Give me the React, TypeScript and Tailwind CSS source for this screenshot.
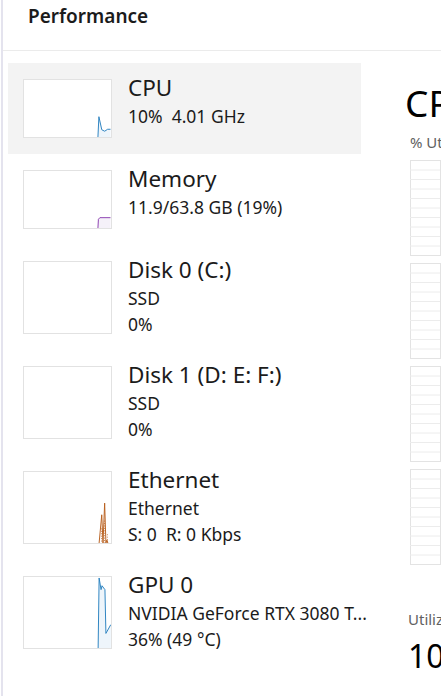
import React from "react";

type Row = {
  title: string;
  lines: string[];
  tall: boolean;
  selected?: boolean;
  graph: React.ReactNode;
};

const CpuGraph = () => (
  <svg viewBox="0 0 89 59" className="w-full h-full">
    <polygon points="76,59 77,38 80,51.5 83,53 86,51 89,51 89,59" fill="#eef5fb" />
    <polyline points="76,59 77,38 80,51.5 83,53 86,51 89,51" fill="none" stroke="#2a82c0" strokeWidth="1" />
  </svg>
);

const MemGraph = () => (
  <svg viewBox="0 0 89 59" className="w-full h-full">
    <polygon points="76,59 76.5,50 78,48.3 89,48.3 89,59" fill="#f5f1f9" />
    <polyline points="76,59 76.5,50 78,48.3 89,48.3" fill="none" stroke="#8b3fb0" strokeWidth="1" />
  </svg>
);

const EthGraph = () => (
  <svg viewBox="0 0 89 73" className="w-full h-full">
    <polyline points="77,73 79.7,44 81,73 82.7,32 84,73 85,70 86,73" fill="none" stroke="#b9601f" strokeWidth="1" />
    <line x1="79.5" y1="58" x2="79.5" y2="73" stroke="#b9601f" strokeWidth="0.8" strokeDasharray="1 1.5" />
    <line x1="82.5" y1="50" x2="82.5" y2="73" stroke="#b9601f" strokeWidth="0.8" strokeDasharray="1 1.5" />
    <line x1="85.5" y1="64" x2="85.5" y2="73" stroke="#b9601f" strokeWidth="0.8" strokeDasharray="1 1.5" />
  </svg>
);

const GpuGraph = () => (
  <svg viewBox="0 0 89 73" className="w-full h-full">
    <polygon points="76,73 77,1 79,13 80,9 83,13 84,58 89,49 89,73" fill="#eef5fb" />
    <polyline points="76,73 77,1 79,13 80,9 83,13 84,58 89,49" fill="none" stroke="#2a82c0" strokeWidth="1" />
  </svg>
);

const rows: Row[] = [
  { title: "CPU", lines: ["10%  4.01 GHz"], tall: false, selected: true, graph: <CpuGraph /> },
  { title: "Memory", lines: ["11.9/63.8 GB (19%)"], tall: false, graph: <MemGraph /> },
  { title: "Disk 0 (C:)", lines: ["SSD", "0%"], tall: true, graph: null },
  { title: "Disk 1 (D: E: F:)", lines: ["SSD", "0%"], tall: true, graph: null },
  { title: "Ethernet", lines: ["Ethernet", "S: 0  R: 0 Kbps"], tall: true, graph: <EthGraph /> },
  { title: "GPU 0", lines: ["NVIDIA GeForce RTX 3080 T...", "36% (49 °C)"], tall: true, graph: <GpuGraph /> },
];

const GridBox = () => (
  <svg width="120" height="96" className="block mb-[7px]">
    <rect x="0.5" y="0.5" width="119" height="95" fill="#ffffff" stroke="#e3e3e3" />
    {[1, 2, 3, 4, 5, 6, 7, 8, 9].map((i) => (
      <line key={i} x1="0" x2="120" y1={i * 9.5 + 0.5} y2={i * 9.5 + 0.5} stroke="#ececec" />
    ))}
    <line x1="30.5" x2="30.5" y1="0" y2="96" stroke="#e3e3e3" />
  </svg>
);

function PerfRow({ row }: { row: Row }) {
  return (
    <div className={`flex pl-[15px] py-4 ${row.selected ? "bg-[#f3f3f3]" : ""}`}>
      <div className={`w-[89px] shrink-0 border border-[#e2e2e2] bg-white ${row.tall ? "h-[73px]" : "h-[59px]"}`}>
        {row.graph}
      </div>
      <div className={`pl-[16px] min-w-0 flex-1 ${row.tall ? "h-[73px]" : "h-[59px]"}`}>
        <div className="text-[22.5px] leading-[31px] -mt-[7px] text-[#1b1b1b] whitespace-nowrap">{row.title}</div>
        {row.lines.map((l) => (
          <div key={l} className="text-[17.5px] leading-[26px] text-[#1b1b1b] whitespace-pre">
            {l}
          </div>
        ))}
      </div>
    </div>
  );
}

export default function App() {
  return (
    <div className="w-[441px] h-[696px] bg-white overflow-hidden flex font-['Noto_Sans',sans-serif]">
      <div className="w-[1px] shrink-0" />
      <div className="w-[2px] shrink-0 bg-[#e4e3ee]" />
      <div className="flex-1 flex flex-col min-w-0">
        <div className="h-[51px] shrink-0 border-b border-[#ebebeb] pl-[25px] pt-[2px]">
          <span className="text-[19px] font-semibold text-[#1b1b1b]">Performance</span>
        </div>
        <div className="flex flex-1 pt-[12px] min-h-0">
          <div className="w-[353px] shrink-0 ml-[5px] relative z-10">
            {rows.map((r) => (
              <PerfRow key={r.title} row={r} />
            ))}
          </div>
          <div className="flex-1 overflow-hidden pl-[44px]">
            <div className="text-[37px] leading-none mt-[21px] text-black whitespace-nowrap">CPU</div>
            <div className="text-[15px] text-[#616161] mt-[10px] ml-[5px] whitespace-nowrap">% Utilization</div>
            <div className="ml-[5px] mt-[6px]">
              <GridBox />
              <GridBox />
              <GridBox />
              <GridBox />
            </div>
            <div className="text-[15px] text-[#616161] mt-[43px] ml-[3px] whitespace-nowrap">Utilization</div>
            <div className="text-[32px] leading-none text-black ml-[3px] mt-[10px] whitespace-nowrap">10%</div>
          </div>
        </div>
      </div>
    </div>
  );
}
